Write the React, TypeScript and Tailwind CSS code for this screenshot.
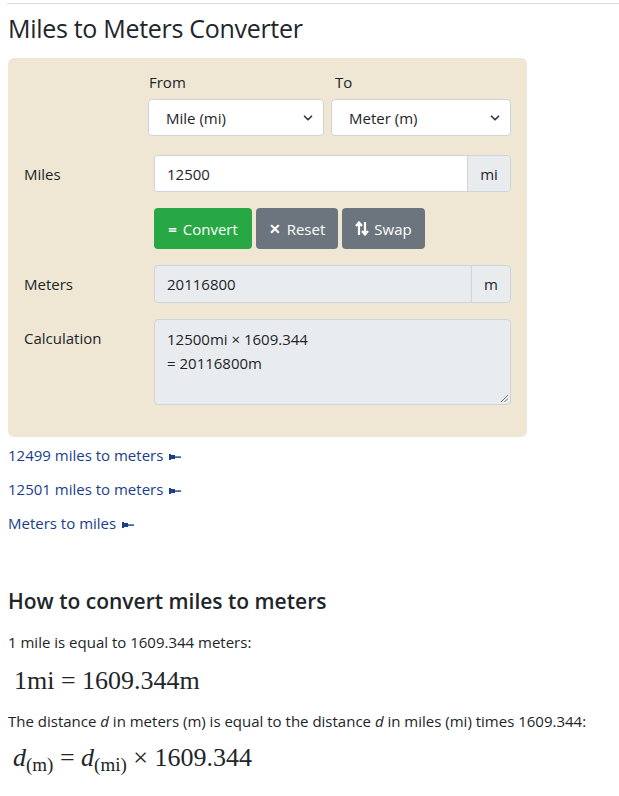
import { ChevronDown } from 'lucide-react';

const LinkArrow = () => (
    <svg width="12" height="8" viewBox="0 0 12 8" className="inline-block ml-[6px] align-middle">
        <rect x="0" y="1" width="2" height="6" fill="#1a3e8a" />
        <rect x="2" y="2" width="4" height="4" fill="#1a3e8a" />
        <rect x="6" y="3.4" width="6" height="1.4" fill="#1a3e8a" />
    </svg>
);

const Select = ({ value, width }: { value: string; width: string }) => (
    <div className={`${width} h-[37px] bg-white border border-[#ced4da] rounded flex items-center justify-between pl-[17px] pr-[8px]`}>
        <span>{value}</span>
        <ChevronDown size={14} strokeWidth={3} className="text-[#343a40]" />
    </div>
);

const App = () => {
    const links = ['12499 miles to meters', '12501 miles to meters', 'Meters to miles'];

    return (
        <div className="bg-white text-[#212529] text-[15px] leading-6 font-['Open_Sans',sans-serif] pl-2 pb-8" style={{ minHeight: 796 }}>
            <hr className="border-t border-[#d9d9d9] ml-[-1px] mt-[3px]" />
            <h1 className="text-[25px] leading-8 mt-[8px] mb-[14px] tracking-[-0.3px]">Miles to Meters Converter</h1>

            <div className="w-[519px] bg-[#efe7d4] rounded-md pt-[12px] pb-[32px] px-4">
                <div className="flex gap-[7px] ml-[124px]">
                    <div className="w-[176px]">
                        <div className="ml-[1px] mb-[5px]">From</div>
                        <Select value="Mile (mi)" width="w-[176px]" />
                    </div>
                    <div className="flex-1">
                        <div className="ml-[4px] mb-[5px]">To</div>
                        <Select value="Meter (m)" width="w-full" />
                    </div>
                </div>

                <div className="grid grid-cols-[130px_1fr] items-center mt-[19px]">
                    <div>Miles</div>
                    <div className="flex h-[37px] border border-[#ced4da] rounded overflow-hidden">
                        <div className="flex-1 bg-white pl-[12px] flex items-center">12500</div>
                        <div className="w-[43px] bg-[#e9ecef] border-l border-[#ced4da] flex items-center justify-center">mi</div>
                    </div>
                </div>

                <div className="flex gap-[4px] ml-[130px] mt-[16px] text-white">
                    <button className="w-[98px] h-[41px] bg-[#28a745] rounded flex items-center justify-center gap-[6px]">
                        <span className="font-bold">=</span> Convert
                    </button>
                    <button className="w-[82px] h-[41px] bg-[#6c757d] rounded flex items-center justify-center gap-[6px]">
                        <span className="font-bold text-[14px]">✕</span> Reset
                    </button>
                    <button className="w-[83px] h-[41px] bg-[#6c757d] rounded flex items-center justify-center gap-[5px]">
                        <svg width="14" height="15" viewBox="0 0 14 15" fill="none" stroke="white" strokeWidth="2.2">
                            <path d="M4 14V2M1 5l3-3.5L7 5" />
                            <path d="M10 1v12M7 10l3 3.5 3-3.5" />
                        </svg>
                        Swap
                    </button>
                </div>

                <div className="grid grid-cols-[130px_1fr] items-center mt-[16px]">
                    <div>Meters</div>
                    <div className="flex h-[38px] border border-[#ced4da] rounded overflow-hidden bg-[#e9ecef]">
                        <div className="flex-1 pl-[12px] flex items-center">20116800</div>
                        <div className="w-[39px] border-l border-[#ced4da] flex items-center justify-center">m</div>
                    </div>
                </div>

                <div className="grid grid-cols-[130px_1fr] items-start mt-[16px]">
                    <div className="mt-[7px]">Calculation</div>
                    <div className="relative h-[86px] border border-[#ced4da] rounded bg-[#e9ecef] pl-[12px] pt-[7px]">
                        <div>12500mi × 1609.344</div>
                        <div>= 20116800m</div>
                        <svg width="8" height="8" viewBox="0 0 8 8" className="absolute right-[2px] bottom-[2px]" stroke="#777" strokeWidth="1">
                            <path d="M1 8L8 1M4.5 8L8 4.5" />
                        </svg>
                    </div>
                </div>
            </div>

            <div className="mt-[6px] text-[#1a3e8a] flex flex-col gap-[10px]">
                {links.map((l, i) => (
                    <a key={i} href="#" className="block">
                        {l}
                        <LinkArrow />
                    </a>
                ))}
            </div>

            <h2 className="text-[21px] font-semibold leading-7 mt-[52px]">How to convert miles to meters</h2>
            <p className="text-[15px] mt-[15px]">1 mile is equal to 1609.344 meters:</p>
            <div className="font-['Liberation_Serif',serif] text-[26px] ml-[6px] mt-[11px] leading-8">1mi = 1609.344m</div>
            <p className="text-[15px] mt-[12px]">
                The distance <i>d</i> in meters (m) is equal to the distance <i>d</i> in miles (mi) times 1609.344:
            </p>
            <div className="font-['Liberation_Serif',serif] text-[26px] ml-[5px] mt-[9px] leading-8">
                <i>d</i>
                <sub className="text-[19px]">(m)</sub> = <i>d</i>
                <sub className="text-[19px]">(mi)</sub> × 1609.344
            </div>
        </div>
    );
};

export default App;
